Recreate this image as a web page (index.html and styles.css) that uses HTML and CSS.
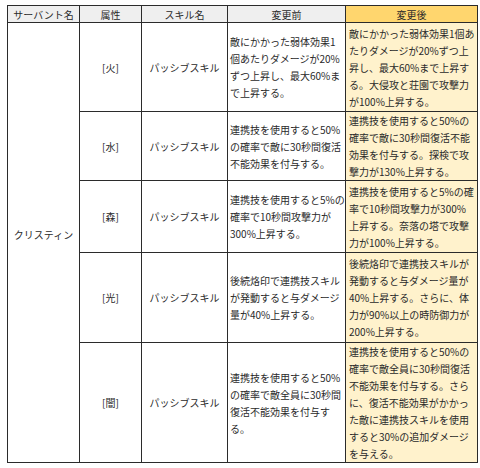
FILE: index.html
```html
<!DOCTYPE html>
<html lang="ja">
<head>
<meta charset="utf-8">
<link rel="stylesheet" href="styles.css">
</head>
<body>
<table class="skills">
  <colgroup>
    <col class="c-name"><col class="c-attr"><col class="c-skill"><col class="c-before"><col class="c-after">
  </colgroup>
  <thead>
    <tr class="head">
      <th>サーバント名</th>
      <th>属性</th>
      <th>スキル名</th>
      <th>変更前</th>
      <th class="after-h">変更後</th>
    </tr>
  </thead>
  <tbody>
    <tr class="r1">
      <td class="name" rowspan="5">クリスティン</td>
      <td class="ctr">[火]</td>
      <td class="ctr">パッシブスキル</td>
      <td class="txt">敵にかかった弱体効果1<br>個あたりダメージが20%<br>ずつ上昇し、最大60%ま<br>で上昇する。</td>
      <td class="txt after">敵にかかった弱体効果1個あ<br>たりダメージが20%ずつ上<br>昇し、最大60%まで上昇す<br>る。大侵攻と荘園で攻撃力<br>が100%上昇する。</td>
    </tr>
    <tr class="r2">
      <td class="ctr">[水]</td>
      <td class="ctr">パッシブスキル</td>
      <td class="txt">連携技を使用すると50%<br>の確率で敵に30秒間復活<br>不能効果を付与する。</td>
      <td class="txt after">連携技を使用すると50%の<br>確率で敵に30秒間復活不能<br>効果を付与する。探検で攻<br>撃力が130%上昇する。</td>
    </tr>
    <tr class="r3">
      <td class="ctr">[森]</td>
      <td class="ctr">パッシブスキル</td>
      <td class="txt">連携技を使用すると5%の<br>確率で10秒間攻撃力が<br>300%上昇する。</td>
      <td class="txt after">連携技を使用すると5%の確<br>率で10秒間攻撃力が300%<br>上昇する。奈落の塔で攻撃<br>力が100%上昇する。</td>
    </tr>
    <tr class="r4">
      <td class="ctr">[光]</td>
      <td class="ctr">パッシブスキル</td>
      <td class="txt">後続烙印で連携技スキル<br>が発動すると与ダメージ<br>量が40%上昇する。</td>
      <td class="txt after">後続烙印で連携技スキルが<br>発動すると与ダメージ量が<br>40%上昇する。さらに、体<br>力が90%以上の時防御力が<br>200%上昇する。</td>
    </tr>
    <tr class="r5">
      <td class="ctr">[闇]</td>
      <td class="ctr">パッシブスキル</td>
      <td class="txt">連携技を使用すると50%<br>の確率で敵全員に30秒間<br>復活不能効果を付与す<br>る。</td>
      <td class="txt after">連携技を使用すると50%の<br>確率で敵全員に30秒間復活<br>不能効果を付与する。さら<br>に、復活不能効果がかかっ<br>た敵に連携技スキルを使用<br>すると30%の追加ダメージ<br>を与える。</td>
    </tr>
  </tbody>
</table>
</body>
</html>
```
FILE: styles.css
```css
html, body {
  margin: 0;
  padding: 0;
  background: #ffffff;
}

body {
  font-family: "Noto Sans CJK JP", "Noto Sans", sans-serif;
  font-size: 10px;
  color: #2a2a2a;
}

.skills {
  margin: 5px 0 0 7px;
  width: 470px;
  table-layout: fixed;
  border-collapse: collapse;
}

.c-name { width: 72px; }
.c-attr { width: 62px; }
.c-skill { width: 86px; }
.c-before { width: 118px; }
.c-after { width: 132px; }

.skills th,
.skills td {
  border: 1px solid #2b2b2b;
  padding: 0;
  line-height: 17px;
  vertical-align: middle;
}

.head th {
  height: 16px;
  background: #efefef;
  font-weight: normal;
  text-align: center;
  line-height: 15px;
}

.head .after-h {
  background: #ffd66e;
}

.ctr {
  text-align: center;
}

.name {
  text-align: center;
  padding-bottom: 16px !important;
}

.txt {
  text-align: left;
  white-space: nowrap;
  padding: 0 1px 0 2px !important;
}

.after {
  background: #fff2cc;
  padding-left: 3px !important;
}

.r1 { height: 89px; }
.r2 { height: 69px; }
.r3 { height: 72px; }
.r4 { height: 90px; }
.r5 { height: 119px; }
```
